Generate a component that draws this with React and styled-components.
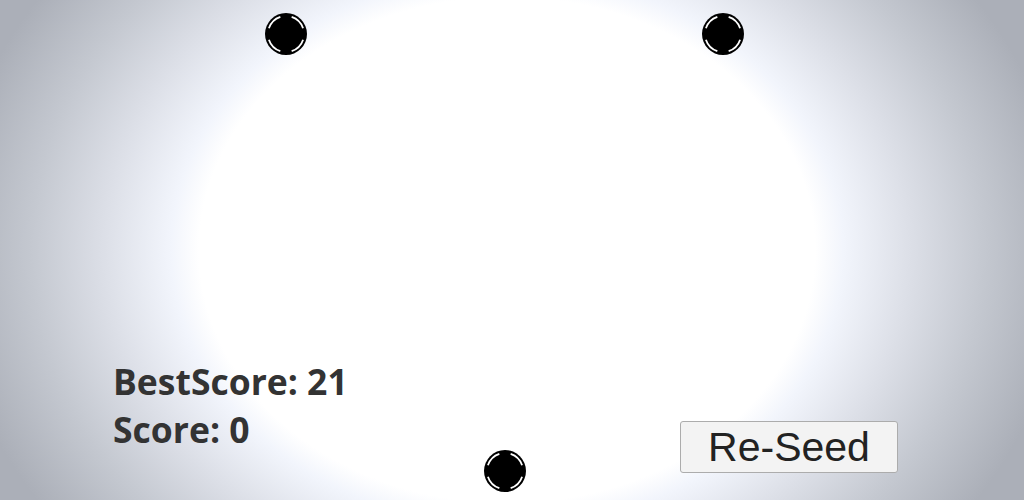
import React from "react";
import styled, { createGlobalStyle } from "styled-components";

const Global = createGlobalStyle`
  html, body { margin: 0; padding: 0; }
  body { width: 1024px; height: 500px; overflow: hidden; }
`;

const Stage = styled.div`
  position: relative;
  width: 1024px;
  height: 500px;
  overflow: hidden;
  background: radial-gradient(
    ellipse 560px 460px at 507px 250px,
    #ffffff 0%,
    #ffffff 55%,
    #f2f5fc 60%,
    #dcdfe7 72%,
    #c4c8d0 85%,
    #abafb8 100%
  );
  display: flex;
  align-items: flex-end;
  justify-content: space-between;
  padding: 0 126px 27px 113px;
  box-sizing: border-box;
`;

const Scores = styled.div`
  font-family: "Open Sans", sans-serif;
  font-weight: 700;
  font-size: 35.5px;
  line-height: 48px;
  color: #333333;
  padding-bottom: 20px;
`;

const ScoreLine = styled.div``;

const ReseedButton = styled.button`
  width: 218px;
  height: 52px;
  background: #f3f3f3;
  border: 1px solid #acacac;
  border-radius: 3px;
  font-family: "Liberation Sans", Arial, sans-serif;
  font-size: 41px;
  color: #222222;
  padding: 0;
  line-height: 1;
  cursor: pointer;
`;

const Node = styled.svg`
  position: absolute;
  width: 44px;
  height: 44px;
  left: ${(p) => p.$x - 22}px;
  top: ${(p) => p.$y - 22}px;
`;

function Target({ x, y }) {
  const r = 18;
  const gap = 0.32;
  const arcs = [0, 1, 2, 3].map((i) => {
    const a0 = (i * Math.PI) / 2 + gap;
    const a1 = ((i + 1) * Math.PI) / 2 - gap;
    const x0 = 22 + r * Math.cos(a0);
    const y0 = 22 + r * Math.sin(a0);
    const x1 = 22 + r * Math.cos(a1);
    const y1 = 22 + r * Math.sin(a1);
    return `M${x0.toFixed(2)} ${y0.toFixed(2)} A${r} ${r} 0 0 1 ${x1.toFixed(2)} ${y1.toFixed(2)}`;
  });
  return (
    <Node $x={x} $y={y} viewBox="0 0 44 44">
      <circle cx="22" cy="22" r="21" fill="#000" />
      {arcs.map((d, i) => (
        <path key={i} d={d} stroke="#fff" strokeWidth="1.8" fill="none" />
      ))}
    </Node>
  );
}

export default function App() {
  return (
    <>
      <Global />
      <Stage>
        <Target x={286} y={34} />
        <Target x={723} y={34} />
        <Target x={505} y={471} />
        <Scores>
          <ScoreLine>BestScore: 21</ScoreLine>
          <ScoreLine>Score: 0</ScoreLine>
        </Scores>
        <ReseedButton>Re-Seed</ReseedButton>
      </Stage>
    </>
  );
}
